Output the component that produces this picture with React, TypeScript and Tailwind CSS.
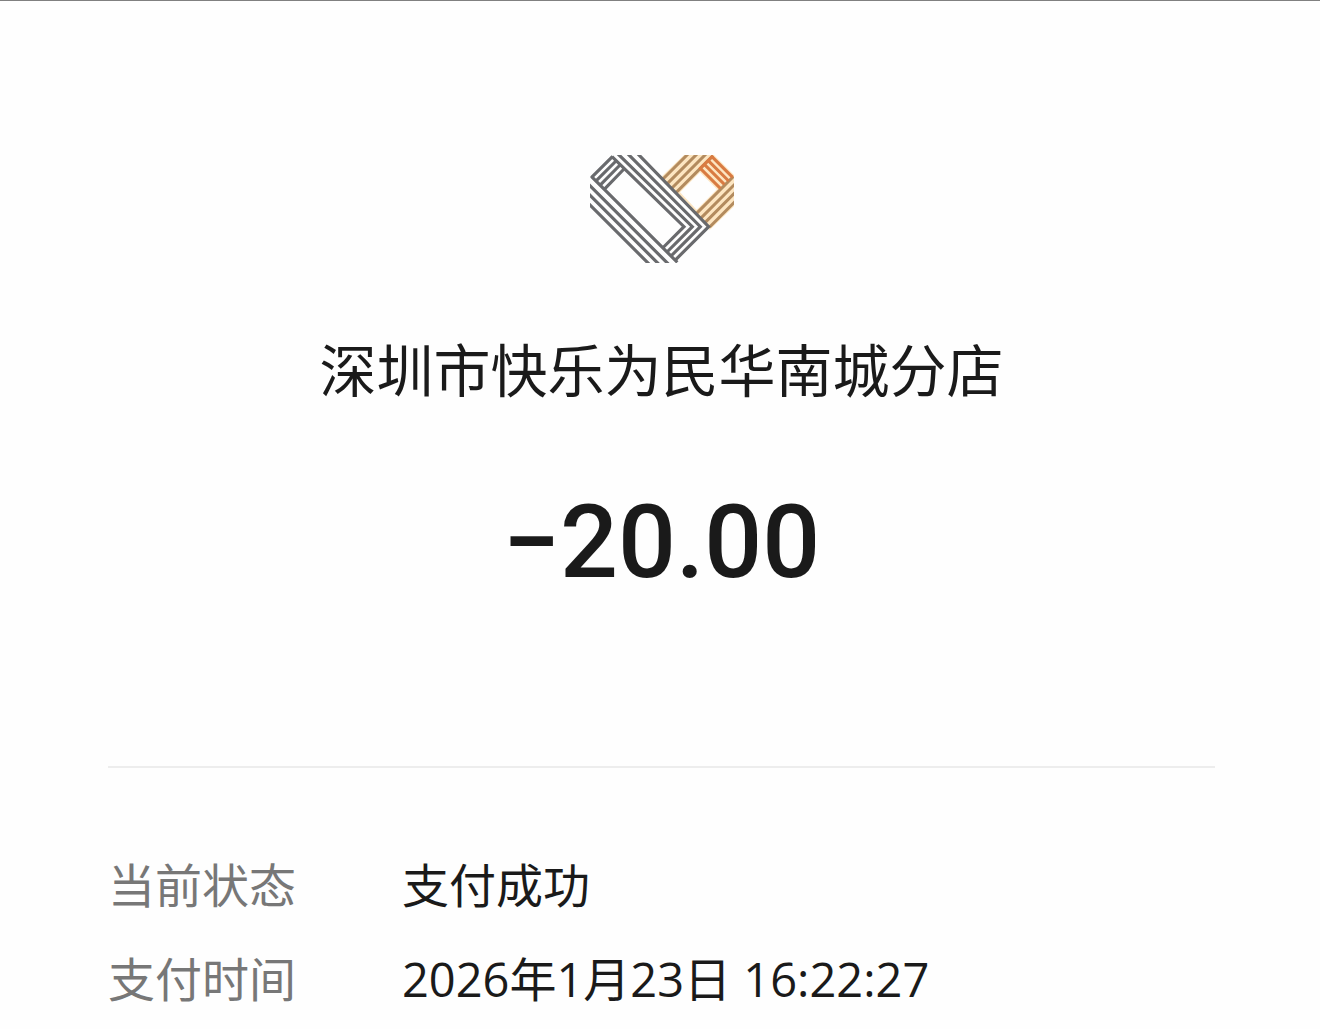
const rows = [
  { label: '当前状态', value: '支付成功' },
  { label: '支付时间', value: '2026年1月23日 16:22:27' },
];

function MerchantLogo() {
  return (
    <svg viewBox="30 30 432 324" className="h-[108px] w-[144px]" fill="none" role="img" aria-label="商户标志">
      <path
        fillRule="evenodd"
        d="M312 30H402L462 90V184L389 255L241 98ZM360 82L300 142L350 194L411 133Z"
        fill="#fde6c2"
      />
      <g stroke="#b38b5e" strokeWidth="9">
        <path d="M325 26L249 102M352 26L262 116M379 26L276 129M399 32L289 142" />
        <path d="M460 95L349 206M466 116L362 220M466 142L375 233M466 169L389 246" />
      </g>
      <g stroke="#d97b42" strokeWidth="9">
        <path d="M395 34L458 97M384 46L446 108M373 58L433 118M361 70L421 130" />
        <path d="M399 32L358 73" />
      </g>
      <g stroke="#696a6d" strokeWidth="9.5">
        <path d="M173 26L386 245L285 346" />
        <path d="M143 26L361 245L273 333" />
        <path d="M113 26L337 245L261 321" />
        <path d="M96 35L312 245L248 309" />
        <path d="M26 176L208 358M26 147L237 358M26 118L266 358M34 94L292 352" />
        <path d="M98 34L34 98M108 48L46 110M120 60L59 122M132 72L72 134" />
      </g>
    </svg>
  );
}

export default function App() {
  return (
    <main className="min-h-screen border-t border-[#808080] bg-[#fefefe] pr-[105px] pl-[108px] font-['Noto_Sans_CJK_SC',sans-serif] text-[#1a1a1a]">
      <header className="flex flex-col items-center border-b-2 border-[#ededed] pt-[154px] pb-[164px]">
        <MerchantLogo />
        <h1 className="mt-16 text-center text-[57px] leading-[80px]">深圳市快乐为民华南城分店</h1>
        <p className="mt-[75px] font-['Roboto',sans-serif] text-[102px] leading-[120px] font-medium">−20.00</p>
      </header>
      <dl className="grid grid-cols-[294px_1fr] gap-y-6 pt-[82px] font-['Open_Sans','Noto_Sans_CJK_SC',sans-serif] text-[47px] leading-[70px]">
        {rows.map((row) => (
          <div key={row.label} className="contents">
            <dt className="text-[#777777]">{row.label}</dt>
            <dd>{row.value}</dd>
          </div>
        ))}
      </dl>
    </main>
  );
}
